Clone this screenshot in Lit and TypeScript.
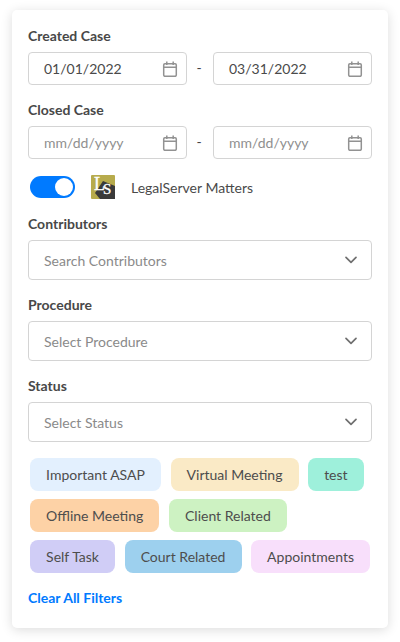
import { LitElement, html, css } from 'lit';
import { customElement } from 'lit/decorators.js';

const CHIPS = [
  { label: 'Important ASAP', color: '#e3f0fe' },
  { label: 'Virtual Meeting', color: '#faeac6' },
  { label: 'test', color: '#9ef0db' },
  { label: 'Offline Meeting', color: '#fdd2a6' },
  { label: 'Client Related', color: '#cdf2c2' },
  { label: 'Self Task', color: '#d0cdf6' },
  { label: 'Court Related', color: '#9dd0ee' },
  { label: 'Appointments', color: '#f8dffb' },
];

const calendarIcon = html`
  <svg class="cal" width="16" height="16" viewBox="0 0 16 16" fill="none" stroke="#929292" stroke-width="1.5">
    <rect x="1.7" y="2.7" width="12.6" height="12.6" rx="1.2"></rect>
    <path d="M1.7 6.3h12.6M4.8 .6v3.4M11.2 .6v3.4"></path>
  </svg>
`;

const chevron = html`
  <svg width="12" height="8" viewBox="0 0 12 8" fill="none" stroke="#707070" stroke-width="1.7" stroke-linecap="round" stroke-linejoin="round">
    <path d="M1 1.3 6 6.3l5-5"></path>
  </svg>
`;

@customElement('app-root')
export class AppRoot extends LitElement {
  static styles = css`
    :host {
      display: block;
      height: 642px;
      background: #fff;
      font-family: Lato, 'Liberation Sans', sans-serif;
      color: #444;
      padding: 10px 12px 14px;
      box-sizing: border-box;
    }
    .card {
      height: 618px;
      box-sizing: border-box;
      background: #fff;
      border-radius: 5px;
      box-shadow: 0 2px 12px rgba(0, 0, 0, 0.14);
      padding: 16px;
      display: flex;
      flex-direction: column;
    }
    .label {
      font-size: 14px;
      font-weight: 700;
      line-height: 20px;
      color: #484848;
      margin-bottom: 6px;
    }
    .dates {
      display: flex;
      align-items: center;
      margin-bottom: 15px;
    }
    .date {
      width: 159px;
      height: 33px;
      box-sizing: border-box;
      border: 1px solid #d4d4d4;
      border-radius: 4px;
      display: flex;
      align-items: center;
      justify-content: space-between;
      padding: 0 8px 0 15px;
      font-size: 14px;
      color: #4a4a4a;
    }
    .date.empty {
      color: #8f8f8f;
    }
    .dash {
      width: 26px;
      text-align: center;
      font-size: 14px;
      color: #444;
      padding-bottom: 3px;
      margin-left: -1px;
      margin-right: 1px;
    }
    .toggle-row {
      display: flex;
      align-items: center;
      height: 24px;
      margin: 1px 0 15px;
      font-size: 14px;
      color: #4a4a4a;
    }
    .toggle {
      width: 45px;
      height: 22px;
      margin-left: 2px;
      border-radius: 11px;
      background: #007aff;
      position: relative;
    }
    .knob {
      position: absolute;
      top: 2px;
      right: 2px;
      width: 18px;
      height: 18px;
      border-radius: 50%;
      background: #fff;
    }
    .logo {
      margin: 0 16px;
      display: block;
    }
    .logo text {
      font-family: 'Liberation Serif', serif;
      fill: #fff;
      stroke: #fff;
      stroke-width: 0.3;
    }
    .select {
      height: 40px;
      box-sizing: border-box;
      border: 1px solid #d4d4d4;
      border-radius: 4px;
      display: flex;
      align-items: center;
      justify-content: space-between;
      padding: 0 14px 0 15px;
      font-size: 14px;
      color: #8a8a8a;
      margin-bottom: 15px;
    }
    .chips {
      display: flex;
      flex-wrap: wrap;
      gap: 8px 9.5px;
      padding-left: 2px;
      margin-top: 1px;
    }
    .chip {
      height: 33px;
      border-radius: 8px;
      padding: 0 16.1px;
      display: flex;
      align-items: center;
      font-size: 14px;
      color: #4d4d4d;
    }
    .clear {
      margin-top: 15px;
      font-size: 14px;
      font-weight: 700;
      line-height: 20px;
      color: #007aff;
    }
  `;

  renderDates(from: string, to: string) {
    const cls = from === 'mm/dd/yyyy' ? 'date empty' : 'date';
    return html`
      <div class="dates">
        <div class=${cls}>${from}${calendarIcon}</div>
        <div class="dash">-</div>
        <div class=${cls}>${to}${calendarIcon}</div>
      </div>
    `;
  }

  renderSelect(label: string, placeholder: string) {
    return html`
      <div class="label">${label}</div>
      <div class="select">${placeholder}${chevron}</div>
    `;
  }

  render() {
    return html`
      <div class="card">
        <div class="label">Created Case</div>
        ${this.renderDates('01/01/2022', '03/31/2022')}
        <div class="label">Closed Case</div>
        ${this.renderDates('mm/dd/yyyy', 'mm/dd/yyyy')}
        <div class="toggle-row">
          <div class="toggle"><div class="knob"></div></div>
          <svg class="logo" width="24" height="24" viewBox="0 0 24 24">
            <rect width="24" height="24" rx="1" fill="#b7ab4c"></rect>
            <polygon points="12,6 24,11 24,24 9,24 4,18" fill="#3a3a3a"></polygon>
            <text x="3" y="15"><tspan font-size="18">L</tspan><tspan dx="-2" dy="4" font-size="15">S</tspan></text>
          </svg>
          <span>LegalServer Matters</span>
        </div>
        ${this.renderSelect('Contributors', 'Search Contributors')}
        ${this.renderSelect('Procedure', 'Select Procedure')}
        ${this.renderSelect('Status', 'Select Status')}
        <div class="chips">
          ${CHIPS.map(c => html`<div class="chip" style="background:${c.color}">${c.label}</div>`)}
        </div>
        <div class="clear">Clear All Filters</div>
      </div>
    `;
  }
}
